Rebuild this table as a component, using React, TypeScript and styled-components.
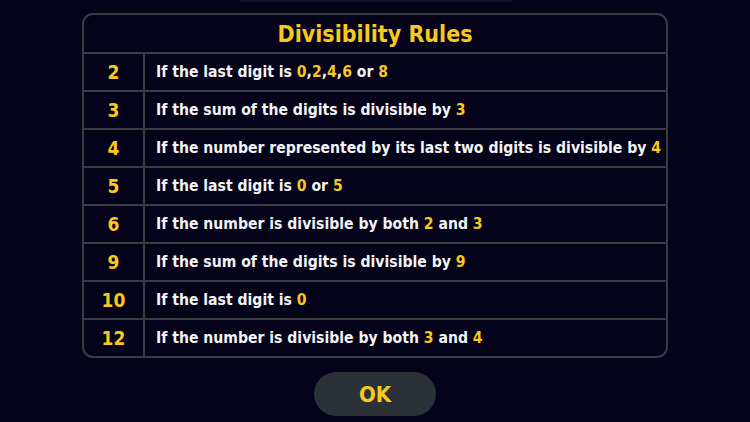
import React from "react";
import styled, { createGlobalStyle } from "styled-components";

const Global = createGlobalStyle`
  html, body { margin: 0; padding: 0; background: #04031a; }
  body { width: 750px; height: 422px; overflow: hidden; }
`;

const Page = styled.div`
  width: 750px;
  height: 422px;
  background: #04031a;
  display: flex;
  flex-direction: column;
  align-items: center;
  font-family: "DejaVu Sans Condensed", "Liberation Sans Narrow", sans-serif;
  font-weight: bold;
  position: relative;
`;

const TopStrip = styled.div`
  position: absolute;
  top: 0;
  left: 240px;
  width: 272px;
  height: 2px;
  background: #13132a;
`;

const Table = styled.div`
  margin-top: 13px;
  width: 586px;
  box-sizing: border-box;
  border: 2px solid #3a3c44;
  border-radius: 11px;
  overflow: hidden;
`;

const Title = styled.div`
  height: 37px;
  display: flex;
  align-items: center;
  justify-content: center;
  color: #f8c81c;
  font-size: 23px;
  border-bottom: 2px solid #3a3c44;
`;

const Row = styled.div<{ $last?: boolean }>`
  display: grid;
  grid-template-columns: 61px 1fr;
  height: 36px;
  border-bottom: ${(p) => (p.$last ? "none" : "2px solid #3a3c44")};
`;

const Num = styled.div`
  display: flex;
  align-items: center;
  justify-content: center;
  color: #f8c81c;
  font-size: 19px;
  border-right: 2px solid #3a3c44;
`;

const Rule = styled.div`
  display: flex;
  align-items: center;
  padding-left: 11px;
  color: #f4f4f6;
  font-size: 15.6px;
  white-space: pre;
`;

const Y = styled.span`
  color: #f8c81c;
`;

const OkButton = styled.div`
  margin-top: 14px;
  width: 122px;
  height: 44px;
  border-radius: 22px;
  background: #2a3238;
  display: flex;
  align-items: center;
  justify-content: center;
  color: #f8c81c;
  font-size: 22px;
`;

type Part = string | { y: string };
const rows: { n: string; parts: Part[] }[] = [
  { n: "2", parts: ["If the last digit is ", { y: "0" }, ",", { y: "2" }, ",", { y: "4" }, ",", { y: "6" }, " or ", { y: "8" }] },
  { n: "3", parts: ["If the sum of the digits is divisible by ", { y: "3" }] },
  { n: "4", parts: ["If the number represented by its last two digits is divisible by ", { y: "4" }] },
  { n: "5", parts: ["If the last digit is ", { y: "0" }, " or ", { y: "5" }] },
  { n: "6", parts: ["If the number is divisible by both ", { y: "2" }, " and ", { y: "3" }] },
  { n: "9", parts: ["If the sum of the digits is divisible by ", { y: "9" }] },
  { n: "10", parts: ["If the last digit is ", { y: "0" }] },
  { n: "12", parts: ["If the number is divisible by both ", { y: "3" }, " and ", { y: "4" }] },
];

export default function App() {
  return (
    <Page>
      <Global />
      <TopStrip />
      <Table>
        <Title>Divisibility Rules</Title>
        {rows.map((r, i) => (
          <Row key={r.n} $last={i === rows.length - 1}>
            <Num>{r.n}</Num>
            <Rule>
              {r.parts.map((p, j) => (typeof p === "string" ? <React.Fragment key={j}>{p}</React.Fragment> : <Y key={j}>{p.y}</Y>))}
            </Rule>
          </Row>
        ))}
      </Table>
      <OkButton>OK</OkButton>
    </Page>
  );
}
